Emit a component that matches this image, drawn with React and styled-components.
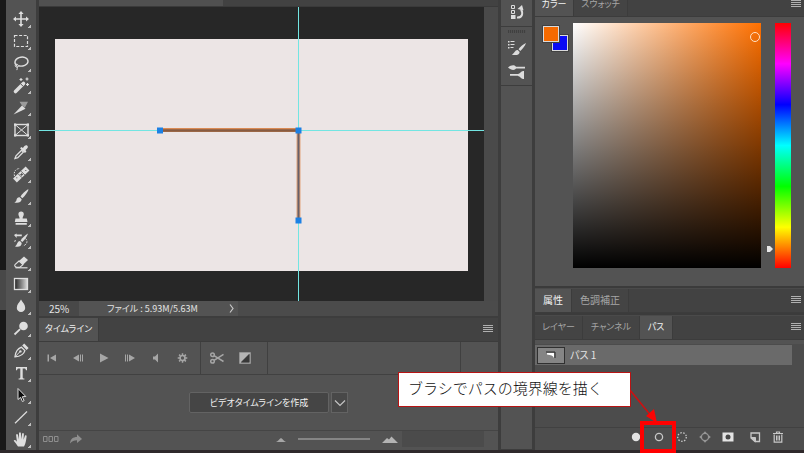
import React, { useState } from 'react'
import styled, { createGlobalStyle } from 'styled-components';

// 툴바 아이콘 : 모두 20x20 기준
const tools = [
    { name: '移動', icon: <g><path d="M10 3v14M3 10h14" strokeWidth="1.6" /><path d="M10 2l-2.6 3h5.2zM10 18l-2.6-3h5.2zM2 10l3-2.6v5.2zM18 10l-3-2.6v5.2z" fill="currentColor" stroke="none" /></g> },
    { name: '長方形選択', icon: <rect x="3.5" y="4.5" width="13" height="11" strokeDasharray="3 1.6" strokeWidth="1.2" /> },
    { name: 'なげなわ', icon: <g><path d="M6.2 12.6C2.6 11 3.4 6.5 8 4.7c4.4-1.6 9 .1 9 3.6 0 3.6-5.4 5.6-9.6 4.5" strokeWidth="1.4" /><path d="M4 11.6c2.3-1.4 4.4.8 2.9 2.3-1.6 1-3.6-.8-2.3-2 2 .6 2 3.6 1.2 5.2" /></g> },
    { name: '自動選択', icon: <g><path d="M4.5 16.5l8-8" strokeWidth="3.6" strokeLinecap="round" /><path d="M9.5 8.7l2.6 2.6" stroke="#535353" /><path d="M10 3v3M8.5 4.5h3M16 2.6v3M14.5 4h3M16.5 8v3M15 9.5h3" strokeWidth="1.2" /></g> },
    { name: 'スライス', icon: <g stroke="none"><path d="M2.5 17.5L11 8.5l3.5 3.2-3.5 1.8z" fill="currentColor" /><path d="M8.5 4.8h8.5l-3.2 6-3-2.6z" fill="#9b9b9b" /></g> },
    { name: 'フレーム', icon: <g><rect x="4" y="4.5" width="13" height="11" strokeWidth="1.4" /><path d="M4 4.5l13 11M17 4.5l-13 11" /><path d="M3 3.5h2.2v2.2H3zM15.8 3.5H18v2.2h-2.2zM3 14.3h2.2v2.2H3zM15.8 14.3H18v2.2h-2.2z" fill="currentColor" stroke="none" /></g> },
    { name: 'スポイト', icon: <g><path d="M4 16.5l1-2.7 5.6-5.6 1.8 1.8-5.6 5.6-2.8.9z" strokeWidth="1.3" /><path d="M9 6.2l1.5-1.3 1.4 1c1.2-1.6 2.6-3.2 4.2-2.4 1.6 1 .8 3-1.6 4.5l.9 1.6-1.4 1.4z" fill="currentColor" stroke="none" /></g> },
    { name: '修復ブラシ', icon: <g><path d="M3.5 12C2.300 7.500 5 4.500 9 4.500" strokeDasharray="1.5 1.2" /><path d="M6 14.500l8.500-8" strokeWidth="5.600" strokeLinecap="square" /><path d="M7.200 9.800l4 4M10 7.200l4 4" stroke="#535353" strokeWidth=".9" /><path d="M10.600 9.200v2.600M9.300 10.500h2.600" stroke="#535353" strokeWidth="1.1" /><path d="M5.800 13.300v1M14.800 6v1" stroke="#535353" /></g> },
    { name: 'ブラシ', icon: <g fill="currentColor" stroke="none"><path d="M17 3.2c-2.6 1.6-6 4.8-7.5 7.3l1.8 1.7c2.5-2 5-5.8 6.2-8.5z" /><path d="M8.7 11.2c-2.4-.2-3 1.4-3.2 2.8-.2 1.2-1 1.8-2.2 2.4 3.2 1.1 7 .3 7.4-3.1z" /></g> },
    { name: 'スタンプ', icon: <path d="M8.6 10.5c0-2-1.2-2.8-1.2-4.2a2.7 2.7 0 0 1 5.4 0c0 1.4-1.2 2.2-1.2 4.2h4.2l.7 3.4H3.8l.7-3.4zM4.6 15h11.2v1.8H4.6z" fill="currentColor" stroke="none" /> },
    { name: 'ヒストリーブラシ', icon: <g><path d="M3 5l2.6-1.5v1.1h5.2v1.6H5.6V8z" fill="currentColor" stroke="none" /><path d="M14.5 8.5c3 2.8 1 6.5-2.6 7.5M4.5 10c-.8 1-.8 2-.4 3" strokeDasharray="2 1.2" /><path d="M17 3.5c-2.4 1.4-5.5 4-7.4 7l1.7 1.6c2.4-2 4.8-5.8 5.7-8.6z" fill="currentColor" stroke="none" /><path d="M9 11c-2.6 0-2.6 3.8-5 5.5 3.4.8 6.6.2 6.7-3.5z" fill="currentColor" stroke="none" /></g> },
    { name: '消しゴム', icon: <g><path d="M8.2 8.8l4.8-4.2 4 3.4-5 4.8z" fill="currentColor" stroke="none" /><path d="M8 9l-4 3.6c-1 1 .6 2.8 2 2.8h2.6l3.3-2.7z" strokeWidth="1.1" /><path d="M4.5 15.8h12" strokeWidth="1.2" /></g> },
    { name: 'グラデーション', icon: <rect x="3.5" y="4.5" width="13" height="11" fill="url(#toolGrad)" strokeWidth="1.3" /> },
    { name: 'ぼかし', icon: <path d="M10 3.6c1.8 3 4.2 5.2 4.2 8.3a4.2 4.2 0 0 1-8.4 0c0-3.1 2.4-5.3 4.2-8.3z" fill="currentColor" stroke="none" /> },
    { name: '覆い焼き', icon: <g><circle cx="12.5" cy="8" r="4.3" fill="currentColor" stroke="none" /><path d="M3.5 16.5l5.6-5.3" strokeWidth="1.8" /></g> },
    { name: 'ペン', icon: <g><path d="M4 16.8C4.4 12 6 9 10.5 7.2l3.4 3.4C12.6 15 9 16.5 4 16.8z" strokeWidth="1.3" /><path d="M4.2 16.6l4.5-4.6" /><circle cx="9.4" cy="11.4" r="1.2" fill="currentColor" stroke="none" /><path d="M11.2 5.6l2-2 4.4 4.3-2 2.1z" fill="currentColor" stroke="none" /></g> },
    { name: '文字', icon: <path d="M5 4h11v3.2h-1c-.3-1.3-.7-1.7-2-1.7h-1.3v8.7c0 1 .4 1.2 1.7 1.3v1H7.6v-1c1.3-.1 1.7-.3 1.7-1.3V5.500H8C6.700 5.500 6.300 5.900 6 7.200H5z" fill="currentColor" stroke="none" /> },
    { name: 'パス選択', icon: <path d="M7 3.500v11l2.600-2.200 1.800 4.200 1.700-.8-1.800-4 3.500-.2z" fill="#0b0b0b" strokeWidth="1" /> },
    { name: 'ライン', icon: <path d="M4 16.200L16 4.500" strokeWidth="1.200" /> },
    { name: '手のひら', icon: <path d="M7 17.500c-1.500-2-2.600-4-4.300-5.800.6-1.400 2-.8 3.200 1L5.100 6c.2-1.300 1.600-1.200 1.900 0l1 4.400V4.200c.3-1.200 1.700-1.200 1.900 0l.3 6 .9-5.500c.4-1.100 1.700-.9 1.800.3l-.4 5.800 1.500-4c.6-.9 1.700-.5 1.600.6-.5 3.500-.8 7.100-2.600 10.100z" fill="currentColor" stroke="none" /> },
];

const playback = [
    { name: '最初のフレーム', icon: <path d="M1.5 2.500h1.500v7H1.500zM10 2.500v7L4 6z" /> },
    { name: '前のフレーム', icon: <path d="M7 2.500v7L1 6zM8 2.500h1v7H8zM10 2.500h1v7h-1z" /> },
    { name: '再生', icon: <path d="M2 1.500v9L10.500 6z" /> },
    { name: '次のフレーム', icon: <path d="M5 2.500v7L11 6zM1 2.500h1v7H1zM3 2.500h1v7H3z" /> },
    { name: 'ミュート', icon: <path d="M3 4.500h2l3-3v9l-3-3H3z" /> },
    { name: '設定', icon: <g><circle cx="6.500" cy="6" r="2.500" fill="none" stroke="currentColor" strokeWidth="1.700" /><path d="M6.500 1.200v2M6.500 8.800v2M1.700 6h2M9.300 6h2M3.100 2.600l1.300 1.300M8.600 8.100l1.300 1.300M9.900 2.600L8.600 3.900M4.400 8.100L3.100 9.400" stroke="currentColor" strokeWidth="1.500" /></g> },
];

const pathActions = [
    { name: 'パスを塗りつぶす', icon: <circle cx="8" cy="8" r="4.200" fill="#e4e4e4" stroke="none" /> },
    { name: 'ブラシでパスの境界線を描く', marked: true, icon: <circle cx="8" cy="8" r="3.600" strokeWidth="1.300" /> },
    { name: 'パスを選択範囲として読み込む', icon: <circle cx="8" cy="8" r="4.300" strokeDasharray="1.500 1.500" strokeWidth="1.300" /> },
    { name: '作業用パスを作成', icon: <g stroke="#969696"><circle cx="8" cy="8" r="3.600" strokeWidth="1.300" /><path d="M8 2.200L9.800 4.200H6.200zM8 13.800l1.800-2H6.200zM2.200 8l2-1.800v3.600zM13.800 8l-2-1.800v3.600z" fill="#969696" stroke="none" /></g> },
    { name: 'マスクを追加', icon: <g stroke="none"><path d="M2.500 3.500h11v9h-11z" fill="#e4e4e4" /><circle cx="8" cy="8" r="2.500" fill="#484848" /></g> },
];

const editActions = [
    { name: '新規パス', icon: <g><path d="M4 4h8.500v8.500H8L4 9z" strokeWidth="1.300" /><path d="M4 8.500h4.500v4.300z" fill="currentColor" /></g> },
    { name: '削除', icon: <g><path d="M3 4.500h10M6.500 4.300V3h3v1.300M4.200 5.500v7.700h7.600V5.500" strokeWidth="1.200" /><path d="M6.500 6.500v5M8 6.500v5M9.500 6.500v5" /></g> },
];

function MenuButton() {
    return (
        <IconButton aria-label="パネルメニュー" $w={10}>
            <svg width="10" height="8" viewBox="0 0 10 8"><path d="M0 .5h10M0 2.500h10M0 4.500h10M0 6.500h10" stroke="#b0b0b0" /></svg>
        </IconButton>
    )
}

function Toolbar() {
    return (
        <ToolColumn>
            {tools.map((tool) => (
                <ToolButton key={tool.name} aria-label={tool.name}>
                    <svg width="20" height="20" viewBox="0 0 20 20" fill="none" stroke="currentColor">
                        <defs>
                            <linearGradient id="toolGrad"><stop offset="0" stopColor="#222" /><stop offset="1" stopColor="#ddd" /></linearGradient>
                        </defs>
                        {tool.icon}
                    </svg>
                    <Corner />
                </ToolButton>
            ))}
        </ToolColumn>
    )
}

function Canvas() {
    return (
        <CanvasArea>
            <Artboard />
            <Drawing viewBox="0 0 445 294" preserveAspectRatio="none">
                <path d="M0 123.500H445M259.500 0V294" stroke="#73e5e2" />
                <path d="M121 123H260" stroke="#d98a55" strokeWidth="4" />
                <path d="M259.500 123.500V214" stroke="#e2a37a" strokeWidth="4" />
                <path d="M121 123.500H260" stroke="#865b42" strokeWidth="2.500" />
                <path d="M259.500 123.500V214" stroke="#686069" strokeWidth="2" />
                <path d="M118 120.500h6v6h-6zM256.500 120.500h6v6h-6zM256.500 210.500h6v6h-6z" fill="#1c80e4" />
            </Drawing>
        </CanvasArea>
    )
}

function Timeline() {
    const [zoom, setZoom] = useState(0);

    return (
        <>
            <TabBar $h={24}>
                <Tab $active $w={60}>タイムライン</Tab>
                <MenuButton />
            </TabBar>
            <ControlBar>
                <PlayGroup>
                    {playback.map((item) => (
                        <IconButton key={item.name} aria-label={item.name} $w={12}>
                            <svg width="12" height="12" viewBox="0 0 12 12" fill="currentColor">{item.icon}</svg>
                        </IconButton>
                    ))}
                </PlayGroup>
                <EditGroup>
                    <IconButton aria-label="分割" $w={14}>
                        <svg width="14" height="12" viewBox="0 0 14 12" fill="none" stroke="currentColor" strokeWidth="1.500">
                            <circle cx="2.500" cy="2.700" r="1.800" /><circle cx="2.500" cy="9.300" r="1.800" /><path d="M4 3.700L13.500 9.500M4 8.300l9.500-6" />
                        </svg>
                    </IconButton>
                    <IconButton aria-label="トランジション" $w={12}>
                        <svg width="12" height="12" viewBox="0 0 12 12"><path d="M1 1h10v10H1z" fill="none" stroke="#a9a9a9" strokeWidth="1.500" /><path d="M1 1h10L1 11z" fill="#b4b4b4" /><path d="M10.500 2v8.500H2z" fill="#383838" /></svg>
                    </IconButton>
                </EditGroup>
                <TrackGap />
            </ControlBar>
            <TimelineBody>
                <CreateButton>ビデオタイムラインを作成</CreateButton>
                <DropButton aria-label="作成の種類">
                    <svg width="12" height="8" viewBox="0 0 12 8" fill="none" stroke="#c4c4c4" strokeWidth="1.200"><path d="M1 1.500l5 5 5-5" /></svg>
                </DropButton>
            </TimelineBody>
            <TimelineFooter>
                <FooterLeft>
                    <IconButton aria-label="フレームアニメーション" $w={16}>
                        <svg width="16" height="6" viewBox="0 0 16 6" fill="none" stroke="currentColor"><path d="M.5.5h3.500v5H.5zM6 .5h3.500v5H6zM11.500.5H15v5h-3.500z" /></svg>
                    </IconButton>
                    <IconButton aria-label="ビデオをレンダリング" $w={12}>
                        <svg width="12" height="10" viewBox="0 0 12 10" fill="currentColor"><path d="M0 9.500C.3 5 3 3 7 3V.3L12 5 7 9V6.200C4 6.200 2 7 0 9.500z" /></svg>
                    </IconButton>
                </FooterLeft>
                <FooterZoom>
                    <svg width="10" height="5" viewBox="0 0 10 5" fill="#a6a6a6"><path d="M0 5c2-.5 3-3 5-4 2 1 3 3.500 5 4z" /></svg>
                    <ZoomRange type="range" min="0" max="100" value={zoom} aria-label="タイムラインのズーム" onChange={(e) => setZoom(e.target.value)} />
                    <svg width="16" height="7" viewBox="0 0 16 7" fill="#b4b4b4"><path d="M0 7l5-5 2 1.500L9.500.5l3 3L16 7z" /></svg>
                </FooterZoom>
                <FooterEmpty />
            </TimelineFooter>
        </>
    )
}

function Dock() {
    return (
        <DockColumn>
            <DockGroup $h={27}>
                <IconButton aria-label="ヒストリー" $w={20}>
                    <svg width="20" height="18" viewBox="0 0 20 18" fill="none" stroke="#dcdcdc"><path d="M4.500 2.500h3v3h-3zM4.500 7.500h3v3h-3z" /><path d="M4 12h4.500v4H4z" fill="#dcdcdc" stroke="none" /><path d="M10 14.500c5 .3 6.500-3.500 4-8.500" strokeWidth="2" /><path d="M10.500 6l4.500-4 1.500 5.200z" fill="#dcdcdc" stroke="none" /></svg>
                </IconButton>
            </DockGroup>
            <DockGroup $h={59}>
                <Grip />
                <IconButton aria-label="ブラシ設定" $w={20}>
                    <svg width="20" height="18" viewBox="0 0 20 18" fill="#dcdcdc"><path d="M1 2h1.500v1.500H1zM1 5h1.500v1.500H1zM1 8h1.500v1.500H1zM3.500 2h4v1h-4zM3.500 5h4v1h-4zM3.500 8h3v1h-3z" /><path d="M19 4c-3 1.300-6 4-7.500 6.200l1.800 1.700C15.700 10 18 6.800 19 4zM10.700 11c-3-.3-2.700 3.300-6 4.500 3.500 1.200 7.600.8 8-2.500z" /></svg>
                </IconButton>
                <IconButton aria-label="ブラシ" $w={20}>
                    <svg width="20" height="18" viewBox="0 0 20 18" fill="#dcdcdc"><path d="M1 4.500C4 1.500 8 1.500 9 3.700h9v1.900H9C8 7.500 4 7.500 1 4.500zM3 11h8v1.800H3zM11 11c2-.3 2.800-3 6-3v8c-3.200 0-4-2.700-6-3z" /></svg>
                </IconButton>
            </DockGroup>
            <DockGroup />
        </DockColumn>
    )
}

function ColorPanel() {
    const [hue, setHue] = useState(27);

    return (
        <>
            <TabBar $h={17}>
                <Tab $active $w={39}>カラー</Tab>
                <Tab $w={54}>スウォッチ</Tab>
                <MenuButton />
            </TabBar>
            <ColorBody>
                <Swatches>
                    <Swatch $color="#0a0af5" $back aria-label="背景色" />
                    <Swatch $color="#f56a00" aria-label="描画色" />
                </Swatches>
                <ColorField><Picker /></ColorField>
                <HueBox>
                    <HueArrow width="6" height="8" viewBox="0 0 6 8"><path d="M0 1h3l3 3-3 3H0z" fill="#e8e8e8" /></HueArrow>
                    <HueRange type="range" min="0" max="360" value={hue} aria-label="色相" onChange={(e) => setHue(e.target.value)} />
                </HueBox>
            </ColorBody>
        </>
    )
}

function ActionGroup({ items }) {
    return (
        <Actions>
            {items.map((item) => (
                <ActionButton key={item.name} aria-label={item.name}>
                    <svg width="16" height="16" viewBox="0 0 16 16" fill="none" stroke="currentColor">{item.icon}</svg>
                    {item.marked && <Highlight />}
                </ActionButton>
            ))}
        </Actions>
    )
}

function PathPanel() {
    return (
        <>
            <TabBar $h={24}>
                <Tab $w={48}>レイヤー</Tab>
                <Tab $w={57}>チャンネル</Tab>
                <Tab $active $w={33}>パス</Tab>
                <MenuButton />
            </TabBar>
            <PathBody>
                <PathRow>
                    <Thumb>
                        <svg width="12" height="8" viewBox="0 0 12 8"><path d="M1 1h9v6" fill="none" stroke="#292929" /><path d="M2 2h7v5C8 4.500 6 4 2 3.500z" fill="#fff" /></svg>
                    </Thumb>
                    パス 1
                </PathRow>
            </PathBody>
            <PathFooter>
                <ActionGroup items={pathActions} />
                <ActionGroup items={editActions} />
            </PathFooter>
        </>
    )
}

function App() {
    return (
        <>
            <GlobalStyle />
            <Window>
                <Workspace>
                    <EdgeStrip />
                    <Toolbar />
                    <Main>
                        <DocTabs><DocTab /></DocTabs>
                        <CanvasRow><Canvas /></CanvasRow>
                        <StatusBar>
                            <ZoomText>25%</ZoomText>
                            <FileText>ファイル : 5.93M/5.63M</FileText>
                            <IconButton aria-label="情報を表示" $w={6}>
                                <svg width="5" height="9" viewBox="0 0 5 9" fill="none" stroke="#c8c8c8" strokeWidth="1.200"><path d="M1 .5l3 4-3 4" /></svg>
                            </IconButton>
                        </StatusBar>
                        <Timeline />
                    </Main>
                    <Dock />
                    <Side>
                        <ColorPanel />
                        <Divider />
                        <TabBar $h={24}>
                            <Tab $active $kanji $w={37}>属性</Tab>
                            <Tab $kanji $w={57}>色調補正</Tab>
                            <MenuButton />
                        </TabBar>
                        <Divider />
                        <PathPanel />
                    </Side>
                </Workspace>
                <BottomEdge />
                <Callout>
                    ブラシでパスの境界線を描く
                    <Arrow width="30" height="36" viewBox="0 0 30 36"><path d="M0 1l22 27" stroke="#d01010" strokeWidth="1.500" /><path d="M27 34l-11-7 8-7z" fill="#fb0404" /></Arrow>
                </Callout>
            </Window>
        </>
    )
}

const GlobalStyle = createGlobalStyle`
    * {
        box-sizing: border-box;
    }
    body {
        margin: 0;
        background: #3c3c3c;
        overflow: hidden;
    }
    body, button, input {
        font-family: "Noto Sans CJK JP", sans-serif;
        font-size: 10px;
        line-height: 14px;
        font-feature-settings: "palt";
    }
    button {
        padding: 0;
        border: 0;
        background: none;
        color: inherit;
    }
    svg {
        display: block;
        flex: none;
    }
`;

const Window = styled.div`
    position: relative;
    display: flex;
    flex-direction: column;
    height: 100vh;
    color: #e4e4e4;
`;

const Workspace = styled.div`
    flex: 1;
    min-height: 0;
    display: flex;
    background: #3d3d3d;
`;

const BottomEdge = styled.div`
    height: 3px;
    background: #2f292b;
`;

const EdgeStrip = styled.div`
    width: 6px;
    background: linear-gradient(#191919 60%, #484848 60% 69%, #191919 69%);
`;

const ToolColumn = styled.nav`
    width: 30px;
    margin-right: 3px;
    padding-top: 8px;
    display: flex;
    flex-direction: column;
    background: #535353;
`;

const ToolButton = styled.button`
    position: relative;
    flex: 1;
    min-height: 0;
    display: flex;
    align-items: center;
    padding-left: 5px;
    color: #dedede;
`;

const Corner = styled.span`
    position: absolute;
    right: 5px;
    bottom: 2px;
    width: 3px;
    height: 3px;
    background: linear-gradient(135deg, transparent 45%, #bdbdbd 45%);
`;

const Main = styled.main`
    flex: 1;
    min-width: 0;
    display: flex;
    flex-direction: column;
    background: #535353;
`;

const DocTabs = styled.div`
    height: 7px;
    background: #424242;
    border-bottom: 1px solid #3a3a3a;
`;

const DocTab = styled.div`
    width: 184px;
    height: 6px;
    background: #505050;
`;

const CanvasRow = styled.div`
    flex: 1;
    min-height: 0;
    display: flex;
    padding-right: 14px;
    background: #4a4a4a;
`;

const CanvasArea = styled.section`
    position: relative;
    flex: 1;
    display: flex;
    padding: 32px 16px 30px;
    background: #272727;
`;

const Artboard = styled.div`
    flex: 1;
    background: #ece5e5;
`;

const Drawing = styled.svg`
    position: absolute;
    inset: 0;
    width: 100%;
    height: 100%;
    fill: none;
`;

const StatusBar = styled.div`
    height: 17px;
    display: flex;
    align-items: center;
    background: linear-gradient(90deg, #484848 40px, #535353 40px 199px, #4b4b4b 199px);
    border-bottom: 2px solid #3d3d3d;
`;

const ZoomText = styled.span`
    width: 68px;
    padding-left: 10px;
`;

const FileText = styled.span`
    width: 121px;
    font-size: 9px;
`;

const IconButton = styled.button`
    width: ${(props) => props.$w}px;
    display: flex;
    align-items: center;
    justify-content: center;
`;

const TabBar = styled.div`
    height: ${(props) => props.$h}px;
    display: flex;
    align-items: flex-end;
    overflow: hidden;
    background: #424242;
    border-bottom: 1px solid #3c3c3c;

    > ${IconButton} {
        height: 24px;
        margin-left: auto;
        margin-right: 3px;
    }
    ${Main} & > ${IconButton} {
        margin-right: 5px;
    }
`;

const Tab = styled.button`
    width: ${(props) => props.$w}px;
    height: 24px;
    background: ${(props) => (props.$active ? '#535353' : '#444')};
    color: ${(props) => (props.$active ? '#f2f2f2' : '#a6a6a6')};
    border-right: 1px solid #3c3c3c;
    font-size: ${(props) => (props.$kanji ? 10 : 9)}px;
    line-height: 10px;
    white-space: nowrap;
`;

const ControlBar = styled.div`
    height: 33px;
    display: flex;
    color: #a6a6a6;
    border-bottom: 1px solid #414141;
`;

const PlayGroup = styled.div`
    width: 162px;
    display: flex;
    align-items: center;
    gap: 14px;
    padding-left: 7px;
    border-right: 1px solid #404040;
`;

const EditGroup = styled.div`
    width: 67px;
    display: flex;
    align-items: center;
    gap: 15px;
    padding-left: 9px;
    border-right: 1px solid #404040;
`;

const TrackGap = styled.div`
    flex: 1;
    margin-right: 37px;
    border-right: 1px solid #404040;
`;

const TimelineBody = styled.div`
    height: 55px;
    display: flex;
    align-items: center;
    justify-content: center;
    gap: 2px;
`;

const CreateButton = styled.button`
    width: 140px;
    height: 21px;
    background: #454545;
    border: 1px solid #636363;
    border-radius: 2px;
    color: #f2f2f2;
    font-size: 9px;
`;

const DropButton = styled.button`
    width: 17px;
    height: 21px;
    display: flex;
    align-items: center;
    justify-content: center;
    background: #484848;
    border: 1px solid #636363;
`;

const TimelineFooter = styled.div`
    height: 17px;
    margin-bottom: 3px;
    display: flex;
    color: #8e8e8e;
    border-top: 1px solid #454545;
`;

const FooterLeft = styled.div`
    display: flex;
    align-items: center;
    gap: 11px;
    padding-left: 4px;
`;

const FooterZoom = styled.div`
    display: flex;
    align-items: center;
    gap: 12px;
    margin-left: auto;
    padding-right: 4px;
`;

const ZoomRange = styled.input`
    appearance: none;
    width: 72px;
    height: 2px;
    margin: 0;
    background: #858585;

    &::-webkit-slider-thumb {
        appearance: none;
        width: 2px;
        height: 2px;
    }
`;

const FooterEmpty = styled.div`
    width: 82px;
    margin-right: 14px;
    background: #4b4b4b;
`;

const DockColumn = styled.aside`
    width: 31px;
    margin: 0 3px;
    display: flex;
    flex-direction: column;
`;

const DockGroup = styled.div`
    ${(props) => (props.$h ? `height: ${props.$h}px;` : 'flex: 1;')}
    display: flex;
    flex-direction: column;
    align-items: center;
    gap: 6px;
    padding-top: 3px;
    background: #535353;
    border-bottom: 1px solid #3d3d3d;
`;

const Grip = styled.div`
    width: 18px;
    height: 3px;
    background: repeating-linear-gradient(90deg, #404040 0 1px, #505050 1px 2px);
`;

const Side = styled.aside`
    width: 269px;
    display: flex;
    flex-direction: column;
    background: #535353;
`;

const ColorBody = styled.div`
    flex: 1;
    min-height: 0;
    display: flex;
    padding: 6px 13px 18px 6px;
`;

const Swatches = styled.div`
    position: relative;
    width: 32px;
`;

const Swatch = styled.button`
    position: absolute;
    top: ${(props) => (props.$back ? 12 : 3)}px;
    left: ${(props) => (props.$back ? 11 : 2)}px;
    width: 16px;
    height: 16px;
    background: ${(props) => props.$color};
    border: 1px solid #dadada;
    outline: 1px solid #414141;
`;

const ColorField = styled.div`
    position: relative;
    flex: 1;
    background: linear-gradient(to top, #000, transparent), linear-gradient(to right, #fff, #ff7000);
`;

const Picker = styled.span`
    position: absolute;
    top: 9px;
    right: 1px;
    width: 10px;
    height: 10px;
    border: 1px solid #ffe1c4;
    border-radius: 50%;
`;

const HueBox = styled.div`
    position: relative;
    display: flex;
    margin-left: 14px;
`;

const HueRange = styled.input`
    appearance: none;
    writing-mode: vertical-lr;
    width: 16px;
    height: 100%;
    margin: 0;
    background: linear-gradient(#f00, #f0f, #00f, #0ff, #0f0, #ff0, #f00);

    &::-webkit-slider-thumb {
        appearance: none;
        width: 16px;
        height: 2px;
    }
`;

const HueArrow = styled.svg`
    position: absolute;
    right: 18px;
    bottom: 15px;
`;

const Divider = styled.div`
    height: 3px;
    background: #3b3b3b;
    border-bottom: 1px solid #4a4a4a;
`;

const PathBody = styled.div`
    height: 87px;
    padding: 5px 12px 0 0;
    background: linear-gradient(#535353 4px, #4c4c4c 4px);
`;

const PathRow = styled.div`
    height: 20px;
    display: flex;
    align-items: center;
    gap: 5px;
    padding-left: 2px;
    background: #6a6a6a;
`;

const Thumb = styled.span`
    width: 28px;
    height: 17px;
    display: flex;
    align-items: center;
    justify-content: center;
    background: #858585;
    border: 1px solid #303030;
`;

const PathFooter = styled.div`
    height: 23px;
    display: flex;
    justify-content: flex-end;
    gap: 11px;
    padding: 0 18px 4px 0;
    background: #4d4d4d;
    border-top: 1px solid #414141;
    color: #c8c8c8;
`;

const Actions = styled.div`
    display: flex;
    gap: 7px;
`;

const ActionButton = styled.button`
    position: relative;
    width: 16px;
    display: flex;
    align-items: center;
    justify-content: center;
`;

const Highlight = styled.span`
    position: absolute;
    top: -7px;
    left: -11px;
    width: 36px;
    height: 32px;
    border: 4px solid #f00;
`;

const Callout = styled.div`
    position: absolute;
    right: 173px;
    bottom: 46px;
    width: 233px;
    height: 35px;
    padding: 2px 0 0 9px;
    background: #fff;
    border: 1px solid #b81414;
    color: #111;
    font-size: 15px;
    font-weight: 300;
    line-height: 26px;
    font-feature-settings: normal;
    white-space: nowrap;
`;

const Arrow = styled.svg`
    position: absolute;
    left: 100%;
    top: 16px;
`;

export default App;
